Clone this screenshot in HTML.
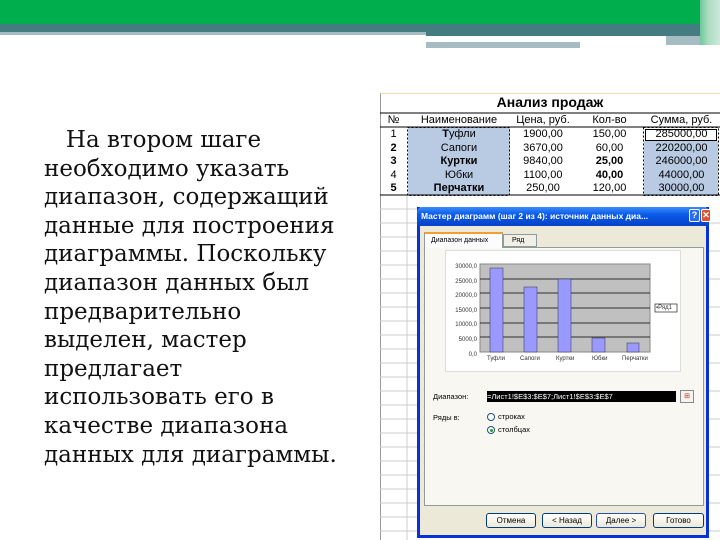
<!DOCTYPE html>
<html><head><meta charset="utf-8"><style>
*{margin:0;padding:0;box-sizing:border-box}
body{width:720px;height:540px;position:relative;overflow:hidden;background:#fff;font-family:"Liberation Sans",sans-serif}
.a{position:absolute}
.txt{position:absolute;left:44px;top:126px;font-family:"DejaVu Serif","Liberation Serif",serif;font-size:23px;line-height:28.6px;color:#111;white-space:nowrap}
.t{font-size:11px;color:#000;position:absolute;text-align:center;line-height:13px}
.sm{font-size:6px;color:#333;position:absolute;white-space:nowrap}
.btn{position:absolute;top:513px;height:15px;border:1px solid #003c74;border-radius:3px;background:linear-gradient(#fff,#ece9d8);font-size:8px;text-align:center;line-height:13px;color:#000}
</style></head><body>
<div class="a" style="left:0;top:0;width:720px;height:24px;background:#00ae4e"></div>
<div class="a" style="left:0;top:24px;width:720px;height:8px;background:#457c82"></div>
<div class="a" style="left:0;top:32px;width:426px;height:3px;background:#a5bcc3"></div>
<div class="a" style="left:426px;top:32px;width:294px;height:4px;background:#457c82"></div>
<div class="a" style="left:426px;top:36px;width:240px;height:3px;background:#fff"></div>
<div class="a" style="left:666px;top:36px;width:54px;height:9px;background:#a5bcc3"></div>
<div class="a" style="left:426px;top:42px;width:154px;height:6px;background:#a5bcc3"></div>
<div class="a" style="left:700px;top:0;width:20px;height:45px;background:linear-gradient(90deg,#6cc79a,#a9dcc0 40%,#cfe8dd)"></div>

<div class="txt">&nbsp;&nbsp;&nbsp;На втором шаге<br>необходимо указать<br>диапазон, содержащий<br>данные для построения<br>диаграммы. Поскольку<br>диапазон данных был<br>предварительно<br>выделен, мастер<br>предлагает<br>использовать его в<br>качестве диапазона<br>данных для диаграммы.</div>

<div class="a" style="left:380px;top:93px;width:340px;height:447px;background:#fff;border-left:1px solid #999;border-top:1px solid #f0d9b5"></div>
<svg class="a" style="left:380px;top:93px" width="340" height="447">
<g stroke="#ccc" stroke-width="1">
<line x1="0" y1="116" x2="37" y2="116"/><line x1="0" y1="130" x2="37" y2="130"/><line x1="0" y1="144" x2="37" y2="144"/><line x1="0" y1="158" x2="37" y2="158"/><line x1="0" y1="172" x2="37" y2="172"/><line x1="0" y1="186" x2="37" y2="186"/><line x1="0" y1="200" x2="37" y2="200"/><line x1="0" y1="214" x2="37" y2="214"/><line x1="0" y1="228" x2="37" y2="228"/><line x1="0" y1="242" x2="37" y2="242"/><line x1="0" y1="256" x2="37" y2="256"/><line x1="0" y1="270" x2="37" y2="270"/><line x1="0" y1="284" x2="37" y2="284"/><line x1="0" y1="298" x2="37" y2="298"/><line x1="0" y1="312" x2="37" y2="312"/><line x1="0" y1="326" x2="37" y2="326"/><line x1="0" y1="340" x2="37" y2="340"/><line x1="0" y1="354" x2="37" y2="354"/><line x1="0" y1="368" x2="37" y2="368"/><line x1="0" y1="382" x2="37" y2="382"/><line x1="0" y1="396" x2="37" y2="396"/><line x1="0" y1="410" x2="37" y2="410"/><line x1="0" y1="424" x2="37" y2="424"/><line x1="0" y1="438" x2="37" y2="438"/>
<line x1="27" y1="102" x2="27" y2="447"/>
</g>
<g stroke="#ccc"><line x1="329" y1="130" x2="340" y2="130"/><line x1="329" y1="158" x2="340" y2="158"/><line x1="329" y1="186" x2="340" y2="186"/><line x1="329" y1="214" x2="340" y2="214"/><line x1="329" y1="242" x2="340" y2="242"/><line x1="329" y1="270" x2="340" y2="270"/><line x1="329" y1="298" x2="340" y2="298"/><line x1="329" y1="326" x2="340" y2="326"/><line x1="329" y1="354" x2="340" y2="354"/><line x1="329" y1="382" x2="340" y2="382"/><line x1="329" y1="410" x2="340" y2="410"/><line x1="329" y1="438" x2="340" y2="438"/></g>
<rect x="28" y="34" width="102" height="68" fill="#b9cae3"/>
<rect x="264" y="48" width="74" height="54" fill="#b9cae3"/>
<line x1="0" y1="20" x2="340" y2="20" stroke="#000"/>
<line x1="0" y1="34" x2="340" y2="34" stroke="#000"/>
<line x1="0" y1="102" x2="340" y2="102" stroke="#000"/>
<g stroke="#000" stroke-dasharray="2,2" fill="none">
<rect x="27.5" y="34.5" width="102" height="68"/>
<rect x="263.5" y="34.5" width="75" height="68"/>
</g>
<rect x="265.5" y="36.5" width="71" height="11" fill="none" stroke="#000"/>
</svg>
<div class="a" style="left:380px;top:94px;width:340px;text-align:center;font-weight:bold;font-size:14px">Анализ продаж</div>
<div class="t" style="left:380px;top:114px;width:27px">№</div>
<div class="t" style="left:408px;top:114px;width:102px">Наименование</div>
<div class="t" style="left:510px;top:114px;width:66px">Цена, руб.</div>
<div class="t" style="left:576px;top:114px;width:67px">Кол-во</div>
<div class="t" style="left:643px;top:114px;width:77px">Сумма, руб.</div>
<div class="t" style="left:380px;top:128px;width:27px;line-height:13.6px">1<br><b>2</b><br><b>3</b><br>4<br><b>5</b></div>
<div class="t" style="left:408px;top:128px;width:102px;line-height:13.6px"><b>Т</b>уфли<br>Сапоги<br><b>Куртки</b><br>Юбки<br><b>Перчатки</b></div>
<div class="t" style="left:510px;top:128px;width:66px;line-height:13.6px">1900,00<br>3670,00<br>9840,00<br>1100,00<br>250,00</div>
<div class="t" style="left:576px;top:128px;width:67px;line-height:13.6px">150,00<br>60,00<br><b>25,00</b><br><b>40,00</b><br>120,00</div>
<div class="t" style="left:643px;top:128px;width:77px;line-height:13.6px">285000,00<br>220200,00<br>246000,00<br>44000,00<br>30000,00</div>

<div class="a" style="left:417px;top:207px;width:292px;height:331px;background:#ece9d8;border:3px solid #0831d9;border-top:none"></div>
<div class="a" style="left:417px;top:207px;width:292px;height:19px;background:linear-gradient(#3a8cf9,#0a5ae8 40%,#0642c8);border-radius:5px 5px 0 0"></div>
<div class="a" style="left:421px;top:211px;font-size:8.5px;color:#fff;font-weight:bold;white-space:nowrap">Мастер диаграмм (шаг 2 из 4): источник данных диа...</div>
<div class="a" style="left:689px;top:209px;width:11px;height:13px;background:#2a6bf5;border:1px solid #fff;border-radius:2px;color:#fff;font-size:9px;text-align:center;line-height:11px;font-weight:bold">?</div>
<div class="a" style="left:701px;top:209px;width:10px;height:13px;background:#e0522c;border:1px solid #fff;border-radius:2px;color:#fff;font-size:9px;text-align:center;line-height:11px;font-weight:bold">✕</div>
<div class="a" style="left:424px;top:247px;width:280px;height:259px;border:1px solid #919b9c;background:#f8f7f2"></div>
<div class="a" style="left:424px;top:232px;width:79px;height:16px;background:#fcfcfe;border:1px solid #919b9c;border-bottom:none;border-top:2px solid #f0a030;font-size:7px;line-height:13px;padding-left:6px">Диапазон данных</div>
<div class="a" style="left:503px;top:234px;width:34px;height:13px;background:#f1efe6;border:1px solid #919b9c;font-size:7px;line-height:11px;padding-left:8px">Ряд</div>
<div class="a" style="left:445px;top:250px;width:236px;height:122px;background:#fff;border:1px solid #ddd"></div>
<svg class="a" style="left:445px;top:250px" width="236" height="122">
<rect x="35" y="14" width="170" height="88" fill="#c0c0c0" stroke="#888"/>
<g stroke="#000" stroke-width="0.8"><line x1="35" y1="29" x2="205" y2="29"/><line x1="35" y1="43" x2="205" y2="43"/><line x1="35" y1="58" x2="205" y2="58"/><line x1="35" y1="73" x2="205" y2="73"/><line x1="35" y1="87" x2="205" y2="87"/></g>
<g fill="#9999ff" stroke="#333" stroke-width="0.5">
<rect x="45" y="18" width="13" height="84"/><rect x="79" y="37" width="13" height="65"/><rect x="113" y="29" width="13" height="73"/><rect x="147" y="88" width="13" height="14"/><rect x="182" y="93" width="12" height="9"/></g>
<rect x="210" y="54" width="22" height="8" fill="#fff" stroke="#000" stroke-width="0.6"/>
</svg>
<div class="sm" style="left:451px;top:260px;line-height:14.6px;text-align:right;width:26px">30000,0<br>25000,0<br>20000,0<br>15000,0<br>10000,0<br>5000,0<br>0,0</div>
<div class="sm" style="left:656px;top:305px">▪Ряд1</div>
<div class="sm" style="left:487px;top:356px">Туфли</div><div class="sm" style="left:520px;top:356px">Сапоги</div><div class="sm" style="left:556px;top:356px">Куртки</div><div class="sm" style="left:592px;top:356px">Юбки</div><div class="sm" style="left:622px;top:356px">Перчатки</div>
<div class="a" style="left:433px;top:392px;font-size:7.5px">Диапазон:</div>
<div class="a" style="left:487px;top:391px;width:189px;height:11px;background:#000;color:#fff;font-size:7.5px;line-height:11px;white-space:nowrap;overflow:hidden">=Лист1!$E$3:$E$7;Лист1!$E$3:$E$7</div>
<div class="a" style="left:680px;top:390px;width:14px;height:13px;border:1px solid #888;background:#f4f3ee;font-size:7px;color:#c33;text-align:center;line-height:11px">⊞</div>
<div class="a" style="left:433px;top:413px;font-size:7.5px">Ряды в:</div>
<div class="a" style="left:487px;top:413px;width:8px;height:8px;border:1px solid #1c5180;border-radius:50%;background:#fff"></div>
<div class="a" style="left:498px;top:412px;font-size:7.5px">строках</div>
<div class="a" style="left:487px;top:426px;width:8px;height:8px;border:1px solid #1c5180;border-radius:50%;background:#fff"><div style="margin:1.5px;width:3px;height:3px;border-radius:50%;background:#21a121"></div></div>
<div class="a" style="left:498px;top:425px;font-size:7.5px">столбцах</div>
<div class="btn" style="left:486px;width:50px">Отмена</div>
<div class="btn" style="left:542px;width:50px">&lt; Назад</div>
<div class="btn" style="left:596px;width:50px;border-color:#2a50b0">Далее &gt;</div>
<div class="btn" style="left:653px;width:51px">Готово</div>
</body></html>
